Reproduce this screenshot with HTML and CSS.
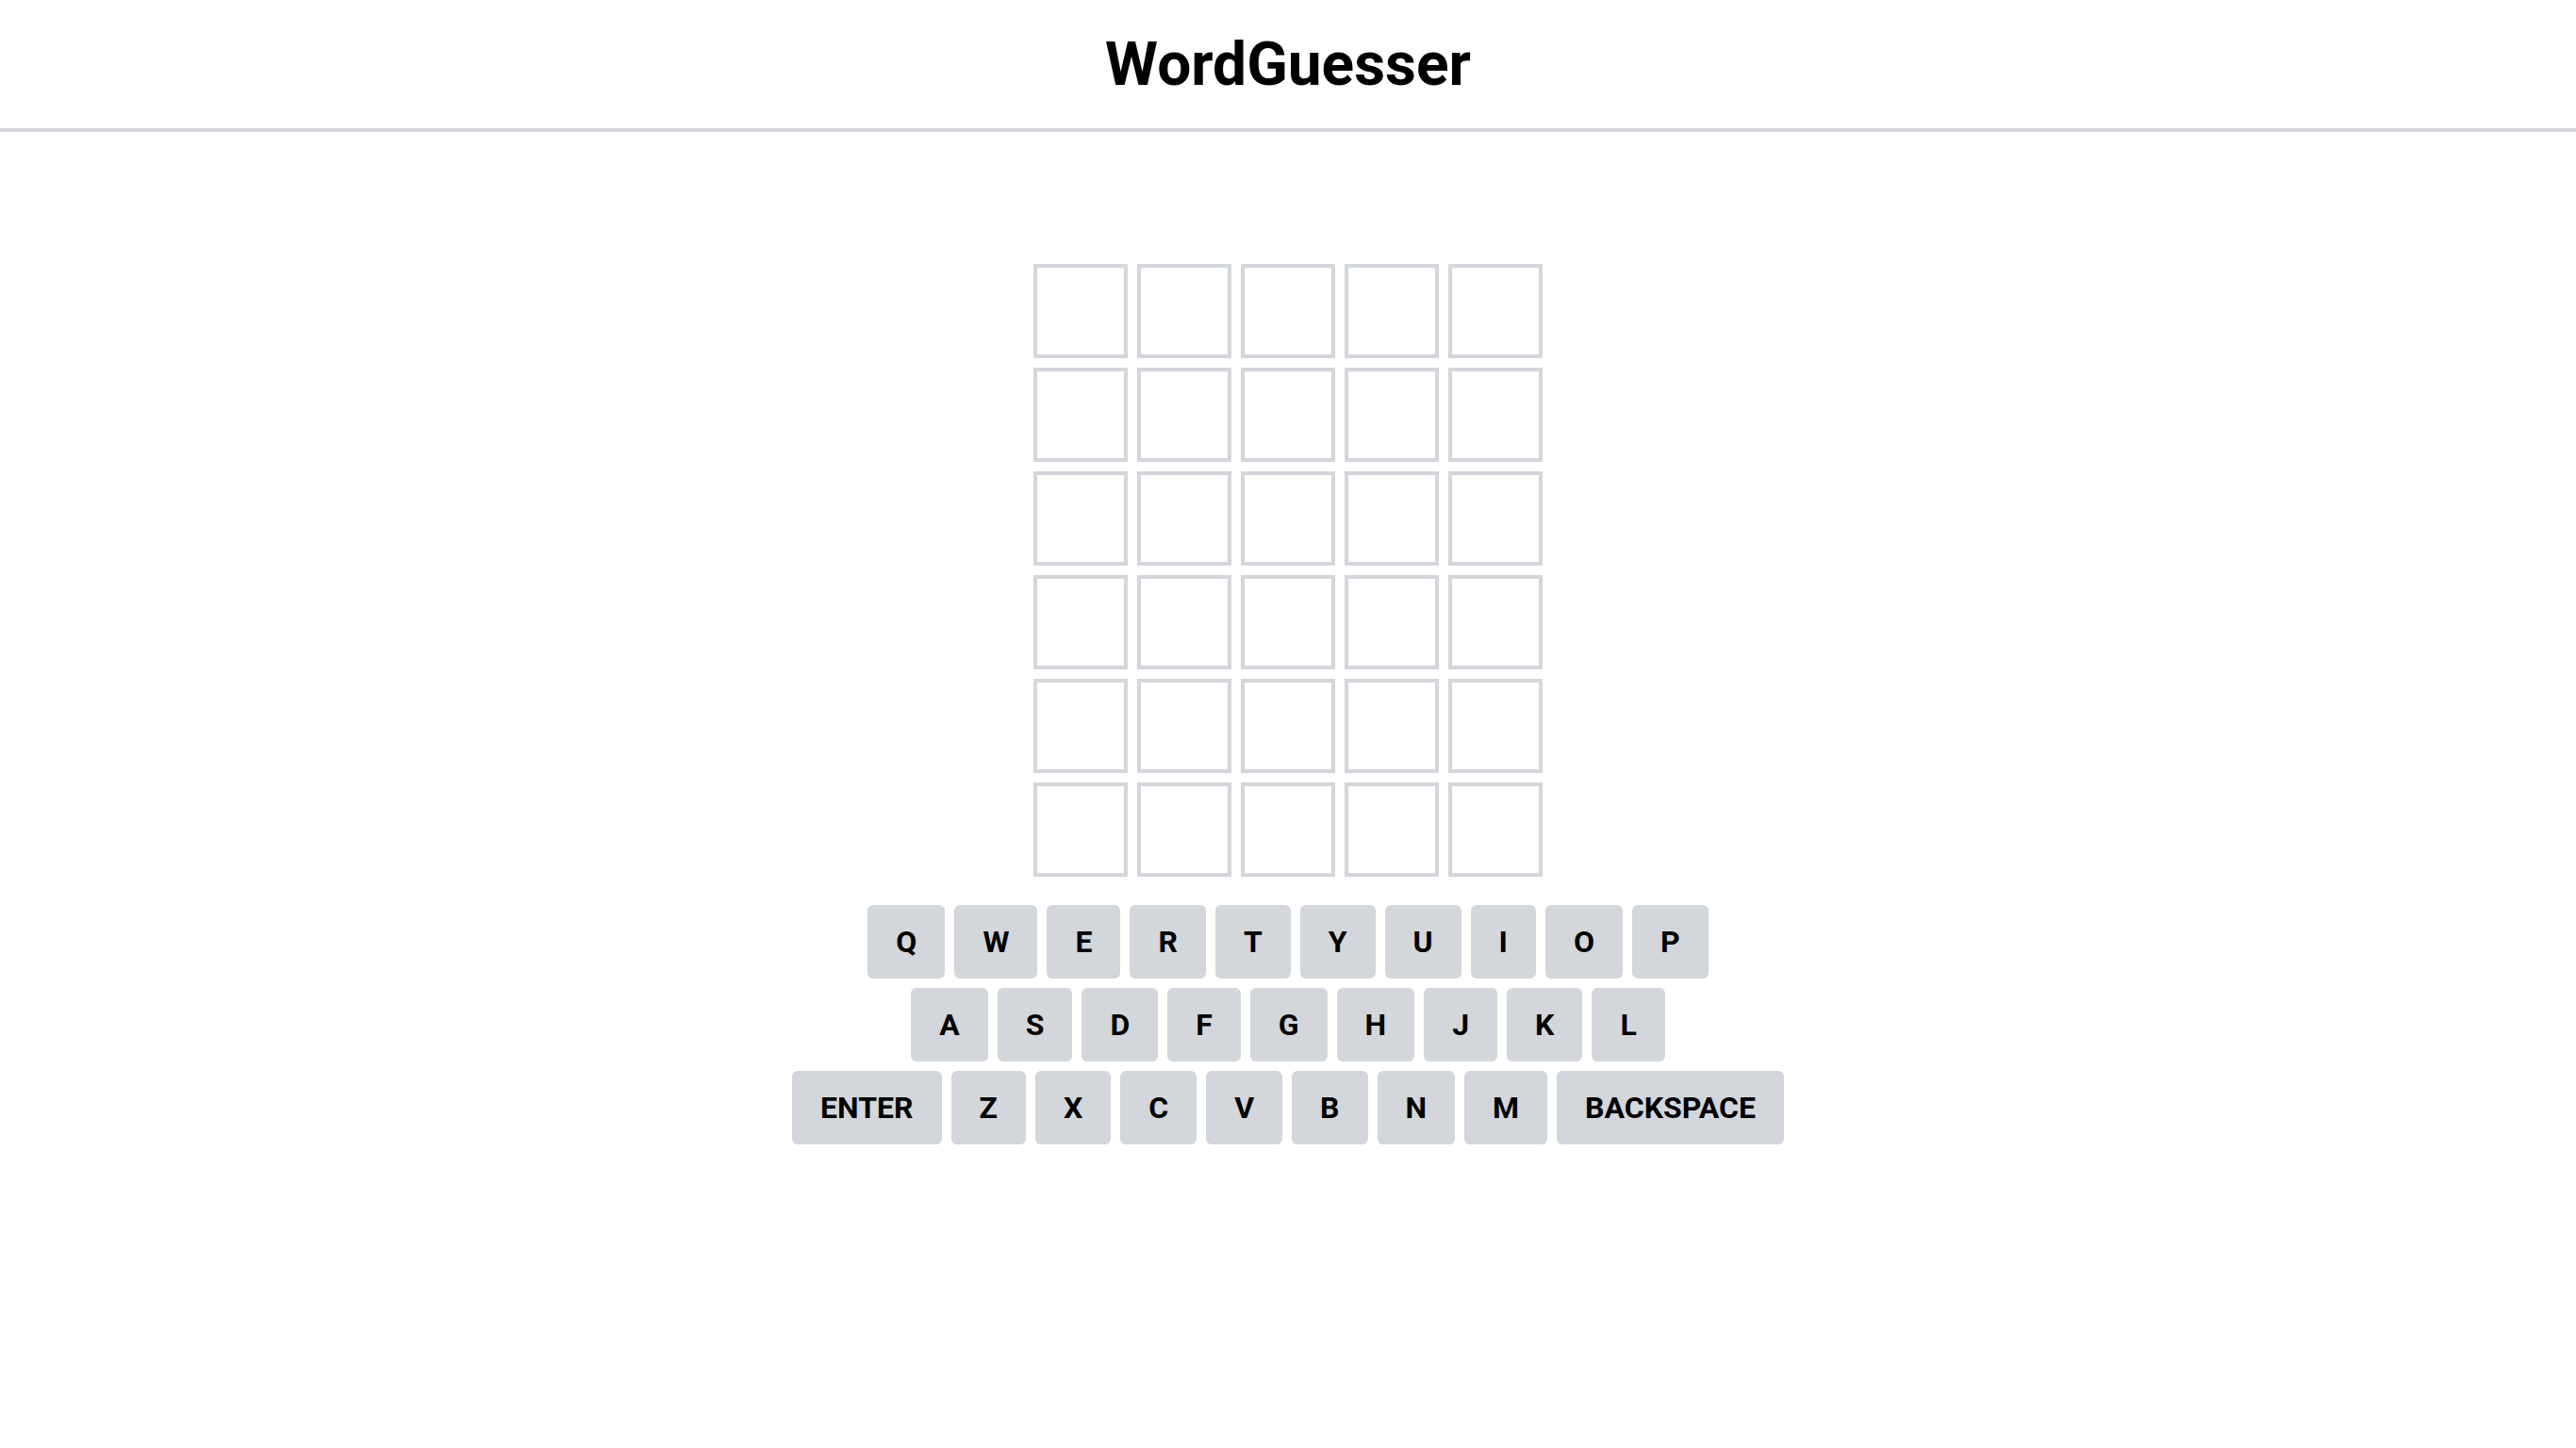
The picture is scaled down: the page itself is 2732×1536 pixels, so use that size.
FILE: index.html
```html
<!DOCTYPE html>
<html lang="en">
<head>
<meta charset="utf-8">
<title>WordGuesser</title>
<link rel="stylesheet" href="styles.css">
</head>
<body>
<header class="header">
  <h1 class="title">WordGuesser</h1>
</header>
<main class="main">
  <div class="board">
    <div class="row"><div class="tile"></div><div class="tile"></div><div class="tile"></div><div class="tile"></div><div class="tile"></div></div>
    <div class="row"><div class="tile"></div><div class="tile"></div><div class="tile"></div><div class="tile"></div><div class="tile"></div></div>
    <div class="row"><div class="tile"></div><div class="tile"></div><div class="tile"></div><div class="tile"></div><div class="tile"></div></div>
    <div class="row"><div class="tile"></div><div class="tile"></div><div class="tile"></div><div class="tile"></div><div class="tile"></div></div>
    <div class="row"><div class="tile"></div><div class="tile"></div><div class="tile"></div><div class="tile"></div><div class="tile"></div></div>
    <div class="row"><div class="tile"></div><div class="tile"></div><div class="tile"></div><div class="tile"></div><div class="tile"></div></div>
  </div>
  <div class="keyboard">
    <div class="krow">
      <button class="key">Q</button><button class="key">W</button><button class="key">E</button><button class="key">R</button><button class="key">T</button><button class="key">Y</button><button class="key">U</button><button class="key">I</button><button class="key">O</button><button class="key">P</button>
    </div>
    <div class="krow">
      <button class="key">A</button><button class="key">S</button><button class="key">D</button><button class="key">F</button><button class="key">G</button><button class="key">H</button><button class="key">J</button><button class="key">K</button><button class="key">L</button>
    </div>
    <div class="krow">
      <button class="key">ENTER</button><button class="key">Z</button><button class="key">X</button><button class="key">C</button><button class="key">V</button><button class="key">B</button><button class="key">N</button><button class="key">M</button><button class="key">BACKSPACE</button>
    </div>
  </div>
</main>
</body>
</html>
```
FILE: styles.css
```css
* { box-sizing: border-box; }
html, body { margin: 0; padding: 0; background: #ffffff; }
body { font-family: Roboto, "Liberation Sans", sans-serif; color: #000; }

.header {
  height: 140px;
  border-bottom: 4px solid #d3d6da;
  display: flex;
  align-items: center;
  justify-content: center;
}
.title {
  margin: 0;
  font-size: 64px;
  font-weight: 700;
  line-height: 1;
  padding-top: 2px;
}

.main {
  padding-top: 140px;
  display: flex;
  flex-direction: column;
  align-items: center;
}

.board {
  display: flex;
  flex-direction: column;
  gap: 10px;
}
.row {
  display: flex;
  gap: 10px;
}
.tile {
  width: 100px;
  height: 100px;
  border: 4px solid #d3d6da;
}

.keyboard {
  margin-top: 30px;
  display: flex;
  flex-direction: column;
  align-items: center;
  gap: 10px;
}
.krow {
  display: flex;
  gap: 10px;
}
.key {
  height: 78px;
  padding: 0 30px;
  border: 0;
  border-radius: 6px;
  background: #d3d6da;
  color: #000;
  font-family: Roboto, "Liberation Sans", sans-serif;
  font-size: 32px;
  font-weight: 700;
  display: flex;
  align-items: center;
  justify-content: center;
}
```
